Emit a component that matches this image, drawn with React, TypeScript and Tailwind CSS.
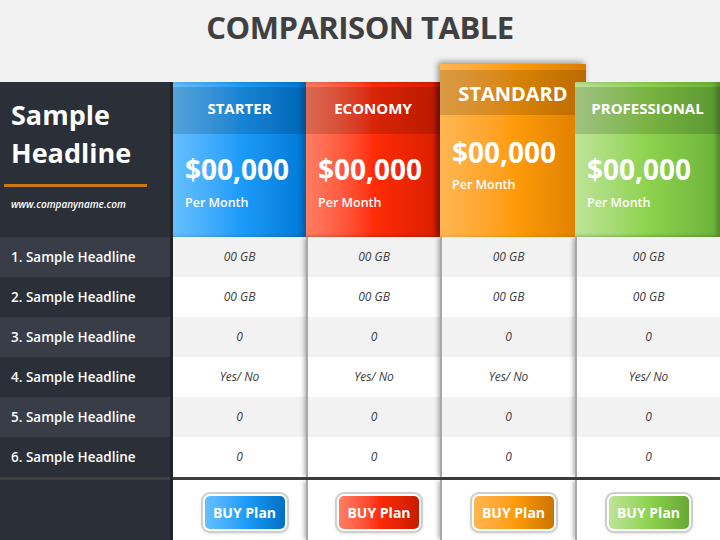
import React from 'react';

type Plan = {
  name: string;
  body: string;
  btn: string;
  width: string;
  featured?: boolean;
  divider?: boolean;
};

const plans: Plan[] = [
  { name: 'STARTER', body: 'from-[#64c0ff] via-[#1d9cf9] to-[#0078d6]', btn: 'from-[#64c0ff] via-[#1d9cf9] to-[#0070c6]', width: 'w-[133px]' },
  { name: 'ECONOMY', body: 'from-[#ff7d62] via-[#ff2c08] to-[#d91e00]', btn: 'from-[#ff7d62] via-[#ff2c08] to-[#c81c00]', width: 'w-[134px]', divider: true },
  { name: 'STANDARD', body: 'from-[#ffb64e] via-[#ff9c0a] to-[#dc7d00]', btn: 'from-[#ffb64e] via-[#ff9c0a] to-[#cc7400]', width: 'w-[135px]', featured: true, divider: true },
  { name: 'PROFESSIONAL', body: 'from-[#bde497] via-[#8ed34e] to-[#6bb23a]', btn: 'from-[#bde497] via-[#8ed34e] to-[#66a833]', width: 'w-[145px]', divider: true },
];

const values = ['00 GB', '00 GB', '0', 'Yes/ No', '0', '0'];
const labels = [1, 2, 3, 4, 5, 6].map(n => `${n}. Sample Headline`);

const PlanHeader: React.FC<{ plan: Plan }> = ({ plan }) => {
  if (plan.featured) {
    return (
      <div className={`relative -mt-[18px] w-[146px] h-[173px] bg-linear-to-r ${plan.body} shadow-[-2px_-2px_6px_rgba(0,0,0,0.4)] pt-[6px]`}>
        <div className="h-[45px] bg-black/15 flex items-center justify-center text-white font-bold text-[20px] leading-none pt-[3px]">
          {plan.name}
        </div>
        <div className="px-3 pt-[19px] text-white">
          <div className="text-[28px] font-bold leading-[36px]">$00,000</div>
          <div className="text-[12.5px] font-semibold leading-[18px] mt-[6px]">Per Month</div>
        </div>
      </div>
    );
  }
  return (
    <div className={`relative h-[155px] bg-linear-to-r ${plan.body} shadow-[inset_-4px_0_4px_rgba(0,0,0,0.22)] pt-[5px]`}>
      <div className="h-[47px] bg-black/15 flex items-center justify-center text-white font-bold text-[15px] leading-none pb-[4px]">
        {plan.name}
      </div>
      <div className="px-3 pt-[17px] text-white">
        <div className="text-[28px] font-bold leading-[36px]">$00,000</div>
        <div className="text-[12.5px] font-semibold leading-[18px] mt-[7px]">Per Month</div>
      </div>
    </div>
  );
};

const PlanColumn: React.FC<{ plan: Plan; offset: boolean; layer: string }> = ({ plan, offset, layer }) => (
  <div className={`${plan.width} flex flex-col relative ${layer}`}>
    <PlanHeader plan={plan} />
    <div className={plan.divider ? 'relative shadow-[-3px_0_4px_-1px_rgba(0,0,0,0.28)] border-l-2 border-[#a8a8a8]' : ''}>
      {values.map((v, i) => (
        <div
          key={i}
          className={`h-10 flex items-center justify-center italic text-[12px] text-[#404040] ${i % 2 === 0 ? 'bg-[#f2f2f2]' : 'bg-white'}`}
        >
          {v}
        </div>
      ))}
    </div>
    <div className="h-[3px] bg-[#404040]" />
    <div className={`h-[60px] bg-white flex items-center justify-center pt-[4px] ${plan.divider ? 'border-l-2 border-[#a8a8a8] shadow-[-3px_0_4px_-1px_rgba(0,0,0,0.28)] relative' : ''}`}>
      <div className={`${offset ? 'ml-[10px]' : ''} rounded-[7px] bg-white p-[2px] shadow-[0_0_0_2px_#cfcfcf,0_1px_4px_rgba(0,0,0,0.3)]`}>
        <div className={`w-[80px] h-[33px] rounded-[5px] bg-linear-to-r ${plan.btn} flex items-center justify-center text-white font-bold text-[14px]`}>
          BUY Plan
        </div>
      </div>
    </div>
  </div>
);

const layers = ['z-[1]', 'z-[2]', 'z-[3]', 'z-[4]'];

export default function App() {
  return (
    <div className="w-[720px] h-[540px] overflow-hidden bg-[#f2f2f2] font-['Open_Sans',sans-serif]">
      <div className="h-[82px] flex justify-center pt-[6px]">
        <h1 className="text-[31px] font-bold leading-[42px] tracking-[-0.5px] text-[#404040]">COMPARISON TABLE</h1>
      </div>
      <div className="flex">
        <div className="w-[173px] flex flex-col bg-[#2b2f37] border-r-[3px] border-[#20242a]">
          <div className="h-[155px] pt-[14px]">
            <div className="pl-[11px] text-white font-bold text-[27px] leading-[38px]">
              Sample
              <br />
              Headline
            </div>
            <div className="ml-[4px] mt-[12px] w-[143px] h-[3px] bg-[#c8780f]" />
            <div className="pl-[11px] mt-[10px] text-white italic font-semibold text-[10px] leading-[14px]">
              www.companyname.com
            </div>
          </div>
          {labels.map((l, i) => (
            <div
              key={l}
              className={`h-10 flex items-center pl-[11px] text-white font-semibold text-[13.5px] ${i % 2 === 0 ? 'bg-[#393d48]' : 'bg-[#2b2f37]'}`}
            >
              {l}
            </div>
          ))}
          <div className="h-[3px] bg-[#404040]" />
          <div className="h-[60px]" />
        </div>
        {plans.map((p, i) => (
          <PlanColumn key={p.name} plan={p} offset={i < 3} layer={layers[i]} />
        ))}
      </div>
    </div>
  );
}
